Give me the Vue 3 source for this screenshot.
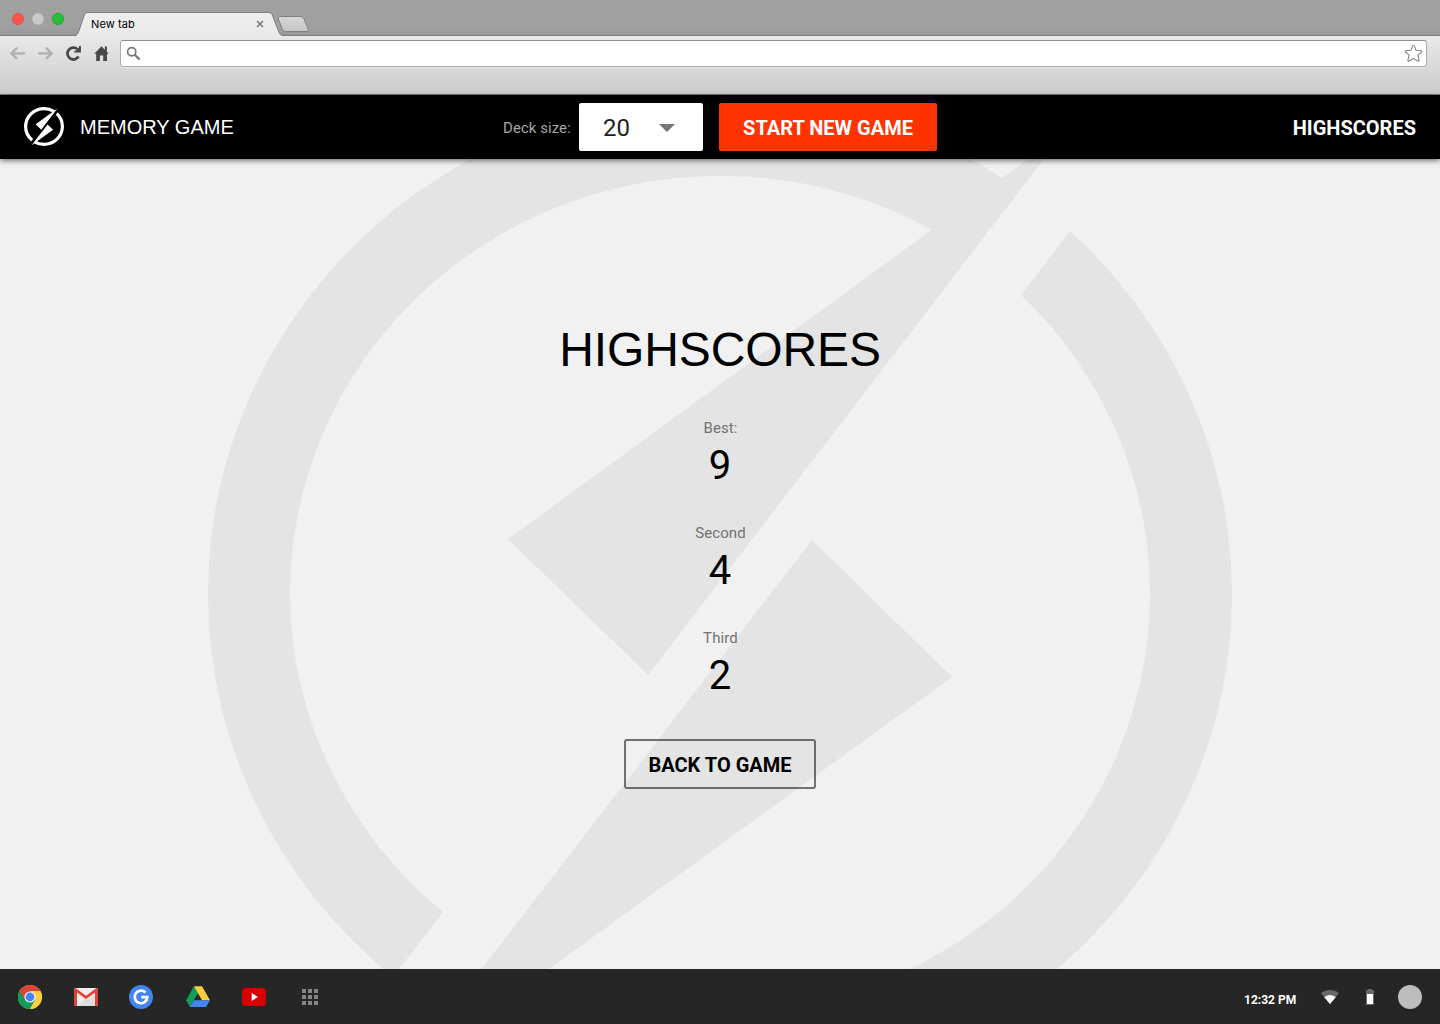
<script setup>
import { ref } from 'vue'

const deckSize = ref(20)
const scores = [
  { label: 'Best:', value: 9 },
  { label: 'Second', value: 4 },
  { label: 'Third', value: 2 },
]
const bolt =
  'M508 539L648 675L1063 134Z' +
  'M812 540L952 677L397 1079Z' +
  'M1003 178.500A512 498 0 0 0 720 96A512 498 0 0 0 208 594A512 498 0 0 0 393 977L443 912A430 418 0 0 1 290 594A430 418 0 0 1 720 176A430 418 0 0 1 932 230L970 225Z' +
  'M1021 295L1070 231A512 498 0 0 1 1232 594A512 498 0 0 1 720 1092A512 498 0 0 1 446 1015L496 950A430 418 0 0 0 720 1012A430 418 0 0 0 1150 594A430 418 0 0 0 1021 295Z'
const dots = [0, 1, 2, 3, 4, 5, 6, 7, 8]
</script>

<template>
  <div class="screen">
    <div class="browser">
      <div class="tabstrip">
        <svg class="lights" width="76" height="36" viewBox="0 0 76 36">
          <circle cx="18" cy="19" r="5.7" fill="#ff544d" stroke="#df4540" stroke-width=".7" />
          <circle cx="38" cy="19" r="5.7" fill="#c9c9c9" stroke="#b9b9b9" stroke-width=".7" />
          <circle cx="58" cy="19" r="5.7" fill="#24c138" stroke="#1b9f2b" stroke-width=".7" />
        </svg>
        <div class="tab">
          <svg class="tab-shape" width="240" height="26" viewBox="0 0 240 26">
            <defs>
              <linearGradient id="tabFill" x1="0" y1="0" x2="0" y2="1">
                <stop offset="0" stop-color="#efefef" />
                <stop offset="1" stop-color="#e8e8e8" />
              </linearGradient>
              <linearGradient id="newFill" x1="0" y1="0" x2="0" y2="1">
                <stop offset="0" stop-color="#d6d6d6" />
                <stop offset="1" stop-color="#c6c6c6" />
              </linearGradient>
            </defs>
            <path d="M-2 25.500C1.300 24.500 1.800 23 2.700 20.500L8 5C8.800 2.600 9.500 1.500 12.500 1.500H192C195 1.500 195.800 2.600 196.700 5L202.700 20.500C203.800 23.500 204.800 24.800 208 25.500V27H-2Z" fill="url(#tabFill)" />
            <path d="M-3 24.500C1 24.500 1.800 23 2.700 20.500L8 5C8.800 2.600 9.500 1.500 12.500 1.500H192C195 1.500 195.800 2.600 196.700 5L202.700 20.500C203.800 23.500 204.800 24.500 208 24.500" fill="none" stroke="#7d7d7d" />
            <path d="M203.500 5.500H223.500C226.500 5.500 227.500 6.500 228.400 9L232 17.500C232.700 19.500 232 20.500 230.500 20.500H210.500C208 20.500 207 19.500 206 17.500L202.500 8C201.700 6 202 5.500 203.500 5.500Z" fill="url(#newFill)" stroke="#7f7f7f" />
          </svg>
          <span class="tab-title">New tab</span>
          <svg class="tab-close" width="8" height="8" viewBox="0 0 8 8">
            <path d="M1 1L7 7M7 1L1 7" stroke="#7e7e7e" stroke-width="1.700" />
          </svg>
        </div>
      </div>
      <div class="toolbar">
        <svg class="nav" width="120" height="32" viewBox="0 37 120 32">
          <g fill="none" stroke="#b0b0b0" stroke-width="2.300" stroke-linecap="round" stroke-linejoin="round">
            <path d="M24 53.300H11.500M16.500 48.300L11.300 53.300L16.500 58.300" />
            <path d="M39 53.300H51.500M46.500 48.300L51.700 53.300L46.500 58.300" />
          </g>
          <path d="M77.500 49.200A6 5.900 0 1 0 78.600 56.600" fill="none" stroke="#484848" stroke-width="2.800" />
          <path d="M80.900 46V52.600H74.300V50.800H76L79 47.500V46Z" fill="#484848" />
          <path d="M101.500 46.300L94.300 53.800H96.200V61H99.900V55.500H103.200V61H107V53.800H108.800L106.900 51.700V46.500H104.900V49.700Z" fill="#484848" />
        </svg>
        <div class="address">
          <svg width="15" height="15" viewBox="0 0 15 15">
            <circle cx="5.700" cy="5.700" r="4.100" fill="none" stroke="#777" stroke-width="1.700" />
            <path d="M9 9L13 12.800" stroke="#777" stroke-width="2.300" stroke-linecap="round" />
          </svg>
          <svg width="19" height="19" viewBox="0 0 19 19">
            <path d="M9.500 1.200C10.200 1.200 10.500 2 10.700 2.600L12 6.200L16.200 6.500C18 6.700 18.200 7.500 17 8.500L13.900 11.100L15 15.500C15.300 17.300 14.500 17.600 13.300 16.800L9.500 14.300L5.700 16.800C4.500 17.600 3.700 17.300 4 15.500L5.100 11.100L2 8.500C.8 7.500 1 6.700 2.800 6.500L7 6.200L8.300 2.600C8.500 2 8.800 1.200 9.500 1.200Z" fill="#fff" stroke="#828282" stroke-width="1.100" />
          </svg>
        </div>
      </div>
    </div>

    <header class="bar">
      <div class="brand">
        <svg class="logo" width="40" height="39" viewBox="208 96 1024 996">
          <path :d="bolt" fill="#fff" />
        </svg>
        <span>MEMORY GAME</span>
      </div>
      <div class="controls">
        <span class="deck-label">Deck size:</span>
        <div class="select">
          <span>{{ deckSize }}</span>
          <svg width="16" height="8" viewBox="0 0 16 8"><path d="M0 0H16L8 8Z" fill="#757575" /></svg>
        </div>
        <button class="start">START NEW GAME</button>
      </div>
      <a class="scores-link">HIGHSCORES</a>
    </header>

    <main class="content">
      <svg class="watermark" width="1024" height="996" viewBox="208 96 1024 996">
        <path :d="bolt" fill="#e4e4e4" />
      </svg>
      <h1>HIGHSCORES</h1>
      <div v-for="s in scores" :key="s.label" class="score">
        <span class="score-label">{{ s.label }}</span>
        <span class="score-value">{{ s.value }}</span>
      </div>
      <button class="back">BACK TO GAME</button>
    </main>

    <footer class="shelf">
      <div class="apps">
        <svg width="24" height="24" viewBox="0 0 24 24">
          <circle cx="12" cy="12" r="12" fill="#ffcd40" />
          <path d="M12 12L1.600 6A12 12 0 0 0 12 24L17.200 15Z" fill="#0f9d58" />
          <path d="M12 12L6.800 15L1.600 6A12 12 0 0 1 22.400 6H12Z" fill="#db4437" />
          <path d="M12 6.200H22.500A12 12 0 0 1 12 24L17.200 15Z" fill="#ffcd40" />
          <circle cx="12" cy="12" r="5.600" fill="#f1f1f1" />
          <circle cx="12" cy="12" r="4.400" fill="#4285f4" />
        </svg>
        <svg width="24" height="24" viewBox="0 0 24 24">
          <rect y="3" width="24" height="18" rx="1.500" fill="#eee" />
          <path d="M3 21L12 13L21 21Z" fill="#dedede" />
          <path d="M3 8L12 14.500L21 7.500V21H18Z" fill="#d5d5d5" opacity=".6" />
          <path d="M0 4.500C0 3.500.6 3 1.500 3L12 10.700L22.500 3C23.400 3 24 3.500 24 4.500V19.500C24 20.500 23.500 21 22.500 21H21V7.500L12 14L3 7.500V21H1.500C.5 21 0 20.500 0 19.500Z" fill="#db4437" />
        </svg>
        <svg class="google" width="24" height="24" viewBox="0 0 24 24">
          <circle cx="12" cy="12" r="12" fill="#4285f4" />
          <path d="M16.500 7.500A6.300 6.300 0 1 0 18.300 12.200H12.200" fill="none" stroke="#fff" stroke-width="2.700" />
        </svg>
        <svg width="24" height="24" viewBox="0 0 24 24">
          <path d="M8 1.200L0 15.200L4 22L12 8.100Z" fill="#0f9d58" />
          <path d="M8 1.200H16L24 15.200H16Z" fill="#ffcd40" />
          <path d="M8 15.200H24L20 22H4Z" fill="#4285f4" />
        </svg>
        <svg width="24" height="24" viewBox="0 0 24 24">
          <rect y="3" width="24" height="18" rx="3.500" fill="#d50000" />
          <path d="M9.700 8L16 12L9.700 16Z" fill="#fff" />
        </svg>
        <svg width="24" height="24" viewBox="0 0 24 24">
          <rect v-for="d in dots" :key="d" :x="4 + (d % 3) * 6" :y="4 + Math.floor(d / 3) * 6" width="4" height="4" fill="#858585" />
        </svg>
      </div>
      <div class="status">
        <span class="clock">12:32 PM</span>
        <svg class="wifi" width="18" height="14" viewBox="0 0 18 14">
          <path d="M9 14L0 3.200C5 -1 13 -1 18 3.200Z" fill="#686868" />
          <path d="M9 14L3.300 7.200C6.500 4.600 11.500 4.600 14.700 7.200Z" fill="#fff" />
        </svg>
        <svg class="battery" width="8" height="16" viewBox="0 0 8 16">
          <path d="M0 2Q0 1 1 1H2V0H6V1H7Q8 1 8 2V16H0Z" fill="#686868" />
          <rect x="1" y="5" width="6" height="10" fill="#fff" />
        </svg>
        <span class="avatar"></span>
      </div>
    </footer>
  </div>
</template>

<style>
body { margin: 0; }
</style>

<style scoped>
* { box-sizing: border-box; }
svg { display: block; flex: none; }
.screen {
  width: 1440px;
  height: 1024px;
  display: flex;
  flex-direction: column;
  overflow: hidden;
  background: #f1f1f1;
  font-family: Roboto, sans-serif;
}
.browser { height: 95px; flex: none; }
.tabstrip {
  height: 36px;
  display: flex;
  background: linear-gradient(#9f9f9f, #a1a1a1 75%, #989898);
  border-bottom: 1px solid #7d7d7d;
}
.tab {
  position: relative;
  display: flex;
  align-items: center;
  width: 240px;
  height: 37px;
  padding: 10px 0 0 15px;
}
.tab-shape { position: absolute; left: 0; top: 11px; overflow: visible; }
.tab-title {
  position: relative;
  width: 165px;
  font: 400 11px/14px Inter, sans-serif;
  letter-spacing: .1px;
  color: #000;
}
.tab-close { position: relative; }
.toolbar {
  height: 59px;
  display: flex;
  background: linear-gradient(#e9e9e9, #cbcbcb);
  border-bottom: 1px solid #777;
}
.nav { margin-top: 1px; }
.address {
  width: 1307px;
  height: 27px;
  margin-top: 4px;
  padding: 0 3px 0 5px;
  display: flex;
  align-items: center;
  justify-content: space-between;
  background: #fff;
  border: 1px solid #aaa;
  border-top-color: #8e8e8e;
  border-radius: 3px;
  box-shadow: 0 1px 0 rgba(255, 255, 255, .4);
}
.bar {
  position: relative;
  z-index: 1;
  flex: none;
  height: 64px;
  padding: 0 24px;
  display: grid;
  grid-template-columns: 1fr auto 1fr;
  align-items: center;
  background: #000;
  color: #fff;
  box-shadow: 0 2px 5px rgba(0, 0, 0, .5);
}
.brand {
  display: flex;
  align-items: center;
  gap: 16px;
  font: 20px/24px "Liberation Sans", sans-serif;
}
.logo { margin-bottom: 1px; }
.controls { display: flex; align-items: center; }
.deck-label {
  width: 76px;
  padding-top: 2px;
  font-size: 15px;
  letter-spacing: .05px;
  color: #a6a6a6;
}
.select {
  width: 124px;
  height: 48px;
  margin-right: 16px;
  padding: 2px 28px 0 24px;
  display: flex;
  align-items: center;
  justify-content: space-between;
  background: #fff;
  border-radius: 2px;
  color: #212121;
  font-size: 24px;
}
button {
  height: 48px;
  padding: 2px 0 0;
  border: 0;
  border-radius: 2px;
  font: 700 20px/24px Roboto, sans-serif;
}
.start { width: 218px; background: #ff3300; color: #fff; }
.scores-link {
  justify-self: end;
  padding-top: 2px;
  font-size: 20px;
  font-weight: 700;
}
.content {
  position: relative;
  flex: 1;
  display: flex;
  flex-direction: column;
  align-items: center;
  padding-top: 163px;
  overflow: hidden;
}
.watermark { position: absolute; left: 208px; top: -63px; }
h1 {
  position: relative;
  margin: 0 0 36px;
  font: 48px/56px "Liberation Sans", sans-serif;
  letter-spacing: -.1px;
  color: #000;
}
.score {
  position: relative;
  height: 73px;
  margin-bottom: 32px;
  display: flex;
  flex-direction: column;
  align-items: center;
}
.score-label { padding-left: 1px; font-size: 15px; line-height: 28px; letter-spacing: .1px; color: #727272; }
.score-value { font-size: 40px; line-height: 48px; color: #000; }
.back {
  position: relative;
  width: 192px;
  height: 50px;
  margin-top: 10px;
  border: 2px solid rgba(0, 0, 0, .53);
  border-radius: 3px;
  background: transparent;
  color: #000;
}
.shelf {
  flex: none;
  height: 55px;
  padding: 0 18px;
  display: flex;
  align-items: center;
  justify-content: space-between;
  background: #262626;
}
.apps { display: flex; gap: 32px; }
.google { margin: 0 1px 0 -1px; }
.status { display: flex; align-items: center; }
.clock { width: 77px; padding-top: 6px; font-size: 12px; font-weight: 700; color: #fff; }
.wifi { margin-right: 27px; }
.battery { margin-right: 24px; }
.avatar { width: 24px; height: 24px; border-radius: 50%; background: #bdbdbd; }
</style>
